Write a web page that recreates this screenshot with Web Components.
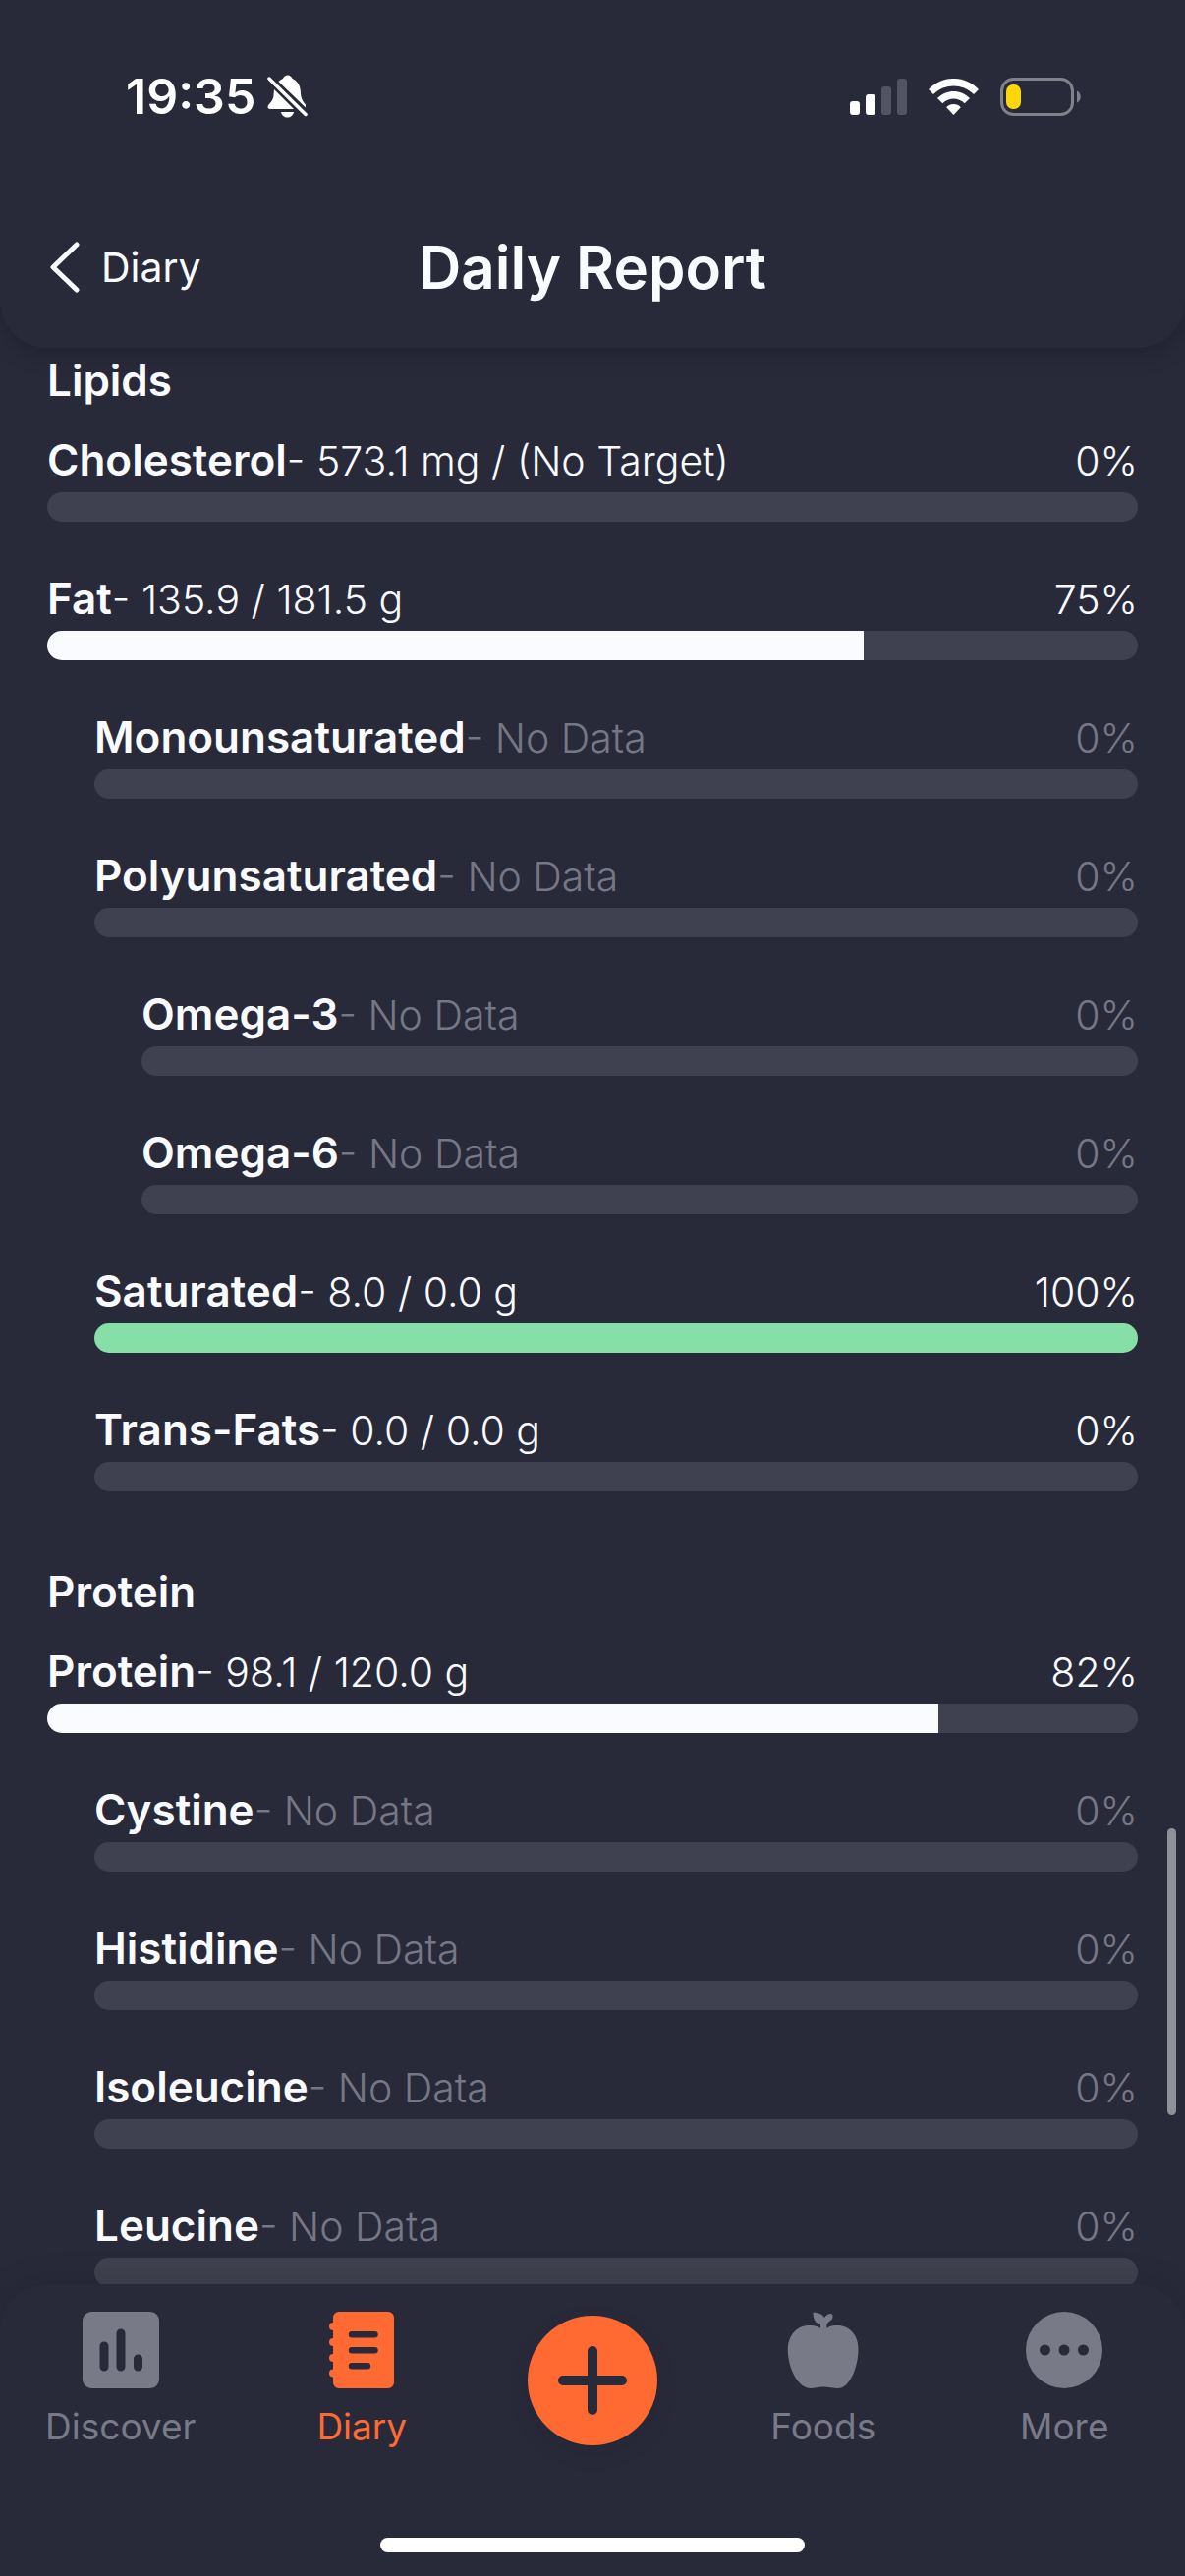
<!DOCTYPE html>
<html lang="en">
<head>
<meta charset="utf-8">
<meta name="viewport" content="width=device-width, initial-scale=1">
<title>Daily Report</title>
<style>
  :root {
    --bg: #282a3a;
    --text: #fafbff;
    --muted: #767784;
    --track: #404150;
    --good: #86dfa6;
    --accent: #ff6a33;
    --gutter: 48px;
  }
  html, body { margin: 0; height: 100%; background: var(--bg); }
  body { font-family: Inter, "Liberation Sans", sans-serif; color: var(--text); }
</style>
</head>
<body>
<app-screen>
  <app-header slot="header" heading="Daily Report" back="Diary"></app-header>
  <nutrient-section heading="Lipids">
    <nutrient-row name="Cholesterol" amount="573.1 mg / (No Target)" value="0" max="1"></nutrient-row>
    <nutrient-row name="Fat" amount="135.9 / 181.5 g" value="135.9" max="181.5"></nutrient-row>
    <nutrient-row name="Monounsaturated" level="1"></nutrient-row>
    <nutrient-row name="Polyunsaturated" level="1"></nutrient-row>
    <nutrient-row name="Omega-3" level="2"></nutrient-row>
    <nutrient-row name="Omega-6" level="2"></nutrient-row>
    <nutrient-row name="Saturated" level="1" amount="8.0 / 0.0 g" value="1" max="1"></nutrient-row>
    <nutrient-row name="Trans-Fats" level="1" amount="0.0 / 0.0 g" value="0" max="1"></nutrient-row>
  </nutrient-section>
  <nutrient-section heading="Protein">
    <nutrient-row name="Protein" amount="98.1 / 120.0 g" value="98.1" max="120"></nutrient-row>
    <nutrient-row name="Cystine" level="1"></nutrient-row>
    <nutrient-row name="Histidine" level="1"></nutrient-row>
    <nutrient-row name="Isoleucine" level="1"></nutrient-row>
    <nutrient-row name="Leucine" level="1"></nutrient-row>
  </nutrient-section>
  <tab-bar slot="footer">
    <tab-item label="Discover">
      <svg viewBox="0 0 78 78" fill="currentColor"><path fill-rule="evenodd" d="M9 0H69a9 9 0 0 1 9 9V69a9 9 0 0 1-9 9H9a9 9 0 0 1-9-9V9a9 9 0 0 1 9-9ZM17.500 35V56a4.500 4.500 0 0 0 9 0V35a4.500 4.500 0 0 0-9 0ZM34.500 22V56a4.500 4.500 0 0 0 9 0V22a4.500 4.500 0 0 0-9 0ZM52 48V56a4.500 4.500 0 0 0 9 0V48a4.500 4.500 0 0 0-9 0Z"/></svg>
    </tab-item>
    <tab-item label="Diary" active>
      <svg viewBox="-1 0 78 78" fill="currentColor"><path fill-rule="evenodd" d="M15 0H65a6 6 0 0 1 6 6V72a6 6 0 0 1-6 6H15a6 6 0 0 1-6-6V66.500a4 4 0 0 1 0-8V51a4 4 0 0 1 0-8V35a4 4 0 0 1 0-8V19a4 4 0 0 1 0-8V6a6 6 0 0 1 6-6ZM28 20a3.200 3.200 0 0 0 0 6.400H51.500a3.200 3.200 0 0 0 0-6.400ZM28 36a3.200 3.200 0 0 0 0 6.400H51.500a3.200 3.200 0 0 0 0-6.400ZM28 52a3.200 3.200 0 0 0 0 6.400H44a3.200 3.200 0 0 0 0-6.400Z"/></svg>
    </tab-item>
    <add-button></add-button>
    <tab-item label="Foods">
      <svg viewBox="0 0 78 78" fill="currentColor"><path d="M36 16.700V12.700C31 12 28.500 8 28.500.7C35 .7 38.500 3 40 6C42 3 45 1.500 47 2C49 2.700 49 6 47.500 8C46 9.500 42.400 11 42.400 14.500V16.700C46 14.500 49 14 53 14C66 14 74.500 24 74.500 38C74.500 56 66 78 54 78C48 78 44 76.500 39 76.500C34 76.500 30 78 26 78C13 78 2.800 57 2.800 39C2.800 24 12 14 24.500 14C29 14 32 14.500 36 16.700Z"/></svg>
    </tab-item>
    <tab-item label="More">
      <svg viewBox="0 0 78 78"><circle cx="39" cy="39" r="39" fill="currentColor"/><g fill="#282a3a"><circle cx="19.500" cy="39" r="5.500"/><circle cx="39" cy="39" r="5.500"/><circle cx="58.500" cy="39" r="5.500"/></g></svg>
    </tab-item>
  </tab-bar>
</app-screen>

<script>
  class BaseElement extends HTMLElement {
    connectedCallback() {
      if (this.shadowRoot) return;
      this.attachShadow({ mode: 'open' }).innerHTML = this.render();
    }
  }

  customElements.define('app-screen', class extends BaseElement {
    render() {
      return `
        <style>
          :host { display: flex; flex-direction: column; height: 100vh; overflow: hidden; background: var(--bg); }
          .view { position: relative; flex: 1; min-height: 0; }
          main { box-sizing: border-box; height: 100%; overflow-y: auto; scrollbar-width: none; padding: 5px var(--gutter) 0; display: flex; flex-direction: column; gap: 74px; }
          .thumb { position: absolute; right: 9px; bottom: 172px; width: 9px; height: 292px; border-radius: 5px; background: #8f9099; }
        </style>
        <slot name="header"></slot>
        <div class="view"><main><slot></slot></main><div class="thumb"></div></div>
        <slot name="footer"></slot>`;
    }
  });

  customElements.define('status-bar', class extends BaseElement {
    render() {
      return `
        <style>
          :host { display: flex; justify-content: space-between; align-items: center; height: 60px; padding: 68px 106px 0 128px; color: #fff; }
          .time { display: flex; align-items: center; gap: 12px; font-size: 50px; line-height: 60px; font-weight: 600; }
          .signals { display: flex; align-items: center; gap: 22px; }
          svg { display: block; }
        </style>
        <div class="time"><span>19:35</span>
          <svg width="42" height="44" viewBox="0 0 42 44" fill="#fff">
            <path d="M7 15L27 35H3C1 35 0 33.500 .8 31.500C3 28.500 6 26.500 6.500 21Z"/>
            <path d="M11.500 7C13 5.500 14.500 4.700 16 4C17.500-.8 24-.8 25.500 4C31 6.500 33.500 11 33.800 17C34 24 36 27 39 30.500V33.500Z"/>
            <path d="M14 38H27C26.500 41.500 23.500 43.500 20.500 43.500S14.500 41.500 14 38Z"/>
            <path d="M2 4L39 40.500" stroke="#fff" stroke-width="3.500" stroke-linecap="round"/>
          </svg>
        </div>
        <div class="signals">
          <svg width="58" height="37" viewBox="0 0 58 37"><rect y="23" width="10" height="14" rx="3" fill="#fff"/><rect x="16" y="16" width="10" height="21" rx="3" fill="#fff"/><rect x="32" y="8" width="10" height="29" rx="3" fill="#535463"/><rect x="48" width="10" height="37" rx="3" fill="#535463"/></svg>
          <svg width="51" height="37" viewBox="0 0 51 37" fill="#fff"><path d="M25.500 37L18.200 29.200C22 25 29 25 32.800 29.200Z"/><path d="M9 20C18.500 10.500 32.500 10.500 42 20L36.700 25.200C30 19 21 19 14.300 25.200Z"/><path d="M0 11C14.500-3.700 36.500-3.700 51 11L46 16C34 4.700 17 4.700 5 16Z"/></svg>
          <svg width="82" height="39" viewBox="0 0 82 39"><rect x="1.500" y="1.500" width="72" height="36" rx="12" fill="none" stroke="#80818b" stroke-width="3"/><rect x="6" y="7" width="15" height="25" rx="7" fill="#ffd60a"/><path d="M78 13.500C83 15.500 83 23.500 78 25.500Z" fill="#80818b"/></svg>
        </div>`;
    }
  });

  customElements.define('app-header', class extends BaseElement {
    render() {
      return `
        <style>
          :host { display: block; position: relative; z-index: 1; background: var(--bg); border-radius: 0 0 48px 48px; box-shadow: 0 6px 24px rgba(0,0,0,.2); }
          .bar { display: grid; grid-template-columns: 1fr auto 1fr; align-items: center; padding: 108px var(--gutter) 46px; }
          button { display: flex; align-items: center; gap: 22px; justify-self: start; border: 0; padding: 0 0 0 3px; background: none; color: inherit; font: 400 41px/72px Inter, "Liberation Sans", sans-serif; }
          h1 { margin: 0; font-size: 60px; line-height: 72px; font-weight: 600; }
        </style>
        <status-bar></status-bar>
        <div class="bar">
          <button type="button"><svg width="30" height="52" viewBox="0 0 30 52" fill="none" stroke="currentColor" stroke-width="5" stroke-linecap="round" stroke-linejoin="round"><path d="M27 3L3 26L27 49"/></svg>${this.getAttribute('back')}</button>
          <h1>${this.getAttribute('heading')}</h1>
        </div>`;
    }
  });

  customElements.define('nutrient-section', class extends BaseElement {
    render() {
      return `
        <style>
          :host { display: block; }
          h2 { margin: 0 0 25px; font-size: 44px; line-height: 56px; font-weight: 600; }
          .rows { display: flex; flex-direction: column; gap: 50px; }
        </style>
        <h2>${this.getAttribute('heading')}</h2>
        <div class="rows"><slot></slot></div>`;
    }
  });

  customElements.define('nutrient-row', class extends BaseElement {
    render() {
      const amount = this.getAttribute('amount');
      const value = Number(this.getAttribute('value') || 0);
      const max = Number(this.getAttribute('max') || 1);
      const percent = Math.round(value / max * 100);
      const kind = amount ? '' : 'muted';
      return `
        <style>
          :host { display: block; }
          :host([level="1"]) { padding-left: 48px; }
          :host([level="2"]) { padding-left: 96px; }
          .text { display: flex; justify-content: space-between; align-items: baseline; height: 56px; margin-bottom: 5px; font-size: 41px; line-height: 56px; font-weight: 300; }
          label { font-size: 44px; font-weight: 600; }
          .muted { color: var(--muted); }
          progress { display: block; appearance: none; width: 100%; height: 30px; border: 0; border-radius: 15px; overflow: hidden; background: var(--track); }
          progress::-webkit-progress-bar { background: var(--track); }
          progress::-webkit-progress-value { background: var(--text); }
          progress.full::-webkit-progress-value { background: var(--good); }
        </style>
        <div class="text"><div><label for="bar">${this.getAttribute('name')}</label><span class="${kind}">- ${amount || 'No Data'}</span></div><span class="${kind}">${percent}%</span></div>
        <progress id="bar" class="${percent === 100 ? 'full' : ''}" max="${max}" value="${value}"></progress>`;
    }
  });

  customElements.define('tab-bar', class extends BaseElement {
    render() {
      return `
        <style>
          :host { display: block; position: relative; z-index: 1; padding-bottom: 24px; background: var(--bg); border-radius: 48px 48px 0 0; box-shadow: 0 -4px 32px rgba(0,0,0,.1); }
          nav { display: flex; align-items: flex-start; padding: 28px 0 91px; }
          .home { width: 432px; height: 15px; margin: 0 auto; border-radius: 8px; background: #fff; }
        </style>
        <nav><slot></slot></nav>
        <div class="home"></div>`;
    }
  });

  customElements.define('tab-item', class extends BaseElement {
    render() {
      return `
        <style>
          :host { display: block; flex: 1; color: #797a87; }
          :host([active]) { color: var(--accent); }
          a { display: flex; flex-direction: column; align-items: center; gap: 17px; color: inherit; text-decoration: none; font-size: 37px; line-height: 44px; font-weight: 400; }
          ::slotted(svg) { display: block; width: 78px; height: 78px; }
        </style>
        <a href="#"><slot></slot><span>${this.getAttribute('label')}</span></a>`;
    }
  });

  customElements.define('add-button', class extends BaseElement {
    render() {
      return `
        <style>
          :host { display: flex; justify-content: center; width: 224px; padding-top: 4px; }
          button { display: grid; place-items: center; width: 132px; height: 132px; border: 0; padding: 0; border-radius: 50%; background: var(--accent); color: var(--bg); box-shadow: 0 8px 24px rgba(0,0,0,.08); }
        </style>
        <button type="button" aria-label="Add"><svg width="70" height="70" viewBox="0 0 70 70" stroke="currentColor" stroke-width="10" stroke-linecap="round"><path d="M35 5V65M5 35H65"/></svg></button>`;
    }
  });
</script>
</body>
</html>
